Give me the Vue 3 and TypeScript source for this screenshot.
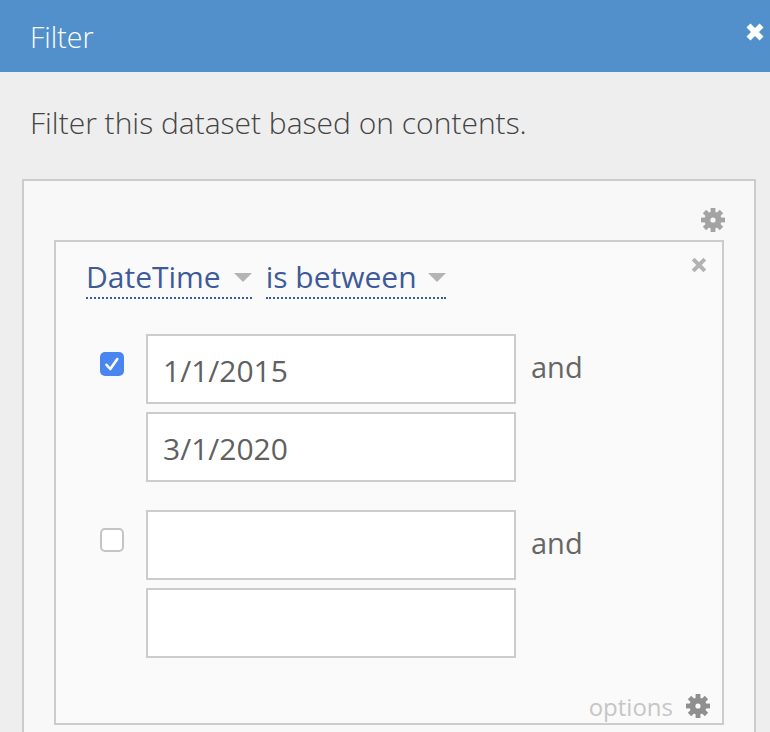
<script setup lang="ts">
const spokes = [0, 45, 90, 135]
const groups = [
  { checked: true, from: '1/1/2015', to: '3/1/2020' },
  { checked: false, from: '', to: '' },
]
</script>

<template>
  <div class="page">
    <header class="head">
      <h1 class="title">Filter</h1>
      <svg class="close" viewBox="0 0 18 18" width="18" height="18">
        <path d="M2.5 2.5l13 13M15.5 2.5l-13 13" stroke="#fff" stroke-width="5.6" fill="none" />
      </svg>
    </header>
    <p class="desc">Filter this dataset based on contents.</p>
    <section class="outer">
      <div class="gear-row">
        <svg class="gear" viewBox="0 0 26 26" width="26" height="26">
          <g fill="#a3a3a3">
            <circle cx="13" cy="13" r="8.6" />
            <rect v-for="a in spokes" :key="a" x="10.6" y="1" width="4.8" height="24" :transform="`rotate(${a} 13 13)`" />
          </g>
          <circle cx="13" cy="13" r="2.6" fill="#f8f8f8" />
        </svg>
      </div>
      <div class="inner">
        <svg class="remove" viewBox="0 0 16 16" width="16" height="16">
          <path d="M2.2 2.2l11.6 11.6M13.8 2.2L2.2 13.8" stroke="#b3b3b3" stroke-width="4" fill="none" />
        </svg>
        <div class="selectors">
          <span class="sel sel-a">DateTime<i class="caret"></i></span>
          <span class="sel sel-b">is between<i class="caret"></i></span>
        </div>
        <div v-for="(g, i) in groups" :key="i" class="group">
          <span class="check" :class="{ on: g.checked }">
            <svg v-if="g.checked" viewBox="0 0 24 24" width="24" height="24">
              <path d="M6.5 12.8l3.8 4.2 7-10" stroke="#fff" stroke-width="2.6" fill="none" stroke-linecap="round" stroke-linejoin="round" />
            </svg>
          </span>
          <div class="inputs">
            <div class="field">{{ g.from }}</div>
            <div class="field">{{ g.to }}</div>
          </div>
          <span class="and">and</span>
        </div>
        <div class="options">
          <span>options</span>
          <svg viewBox="0 0 26 26" width="26" height="26">
            <g fill="#8f8f8f">
              <circle cx="13" cy="13" r="8.6" />
              <rect v-for="a in spokes" :key="a" x="10.6" y="1" width="4.8" height="24" :transform="`rotate(${a} 13 13)`" />
            </g>
            <circle cx="13" cy="13" r="2.6" fill="#fafafa" />
          </svg>
        </div>
      </div>
    </section>
  </div>
</template>

<style>
html, body { margin: 0; background: #eee; overflow: hidden; }
</style>

<style scoped>
.page {
  width: 770px;
  height: 732px;
  overflow: hidden;
  background: #eeeeee;
  font-family: "Open Sans", sans-serif;
  color: #555;
}
.head {
  height: 72px;
  background: #5290cb;
  display: flex;
  align-items: center;
  justify-content: space-between;
  padding-left: 30px;
  box-sizing: border-box;
}
.title {
  margin: 2px 0 0;
  font-size: 28.5px;
  font-weight: 300;
  color: #fff;
  line-height: 70px;
}
.close {
  margin: -8px 6px 0 0;
}
.desc {
  margin: 0;
  padding: 32px 0 0 30px;
  height: 75px;
  box-sizing: border-box;
  font-size: 30px;
  font-weight: 300;
  line-height: 38px;
  color: #444;
}
.outer {
  margin: 32px 14px 0 22px;
  border: 2px solid #ccc;
  background: #f8f8f8;
  padding: 0 30px 40px 30px;
  height: 700px;
  box-sizing: border-box;
}
.gear-row {
  height: 59px;
  display: flex;
  justify-content: flex-end;
  align-items: flex-end;
}
.gear {
  margin: 0 -2px 7px 0;
}
.inner {
  position: relative;
  border: 2px solid #ccc;
  background: #fafafa;
  height: 485px;
  box-sizing: border-box;
  padding: 0 0 0 30px;
}
.remove {
  position: absolute;
  top: 15px;
  right: 15px;
}
.selectors {
  display: flex;
  gap: 14px;
  height: 92px;
  padding-top: 14px;
  box-sizing: border-box;
  align-items: flex-start;
}
.sel {
  display: flex;
  align-items: center;
  height: 41px;
  border-bottom: 2px dotted #3f5a9a;
  color: #3e5a99;
  font-size: 30px;
  line-height: 40px;
  box-sizing: content-box;
}
.caret {
  display: block;
  margin-left: 13px;
  margin-top: 2px;
  width: 0;
  height: 0;
  border-left: 9px solid transparent;
  border-right: 9px solid transparent;
  border-top: 9px solid #b4b4b4;
}
.sel-b .caret {
  margin-left: 11px;
}
.group {
  display: flex;
  align-items: flex-start;
  height: 176px;
}
.check {
  width: 24px;
  height: 24px;
  margin: 18px 22px 0 14px;
  border-radius: 5px;
  box-sizing: border-box;
  border: 2px solid #c4c4c4;
  background: #fff;
  flex: none;
  overflow: hidden;
}
.check.on {
  border: 0;
  background: #4a86f0;
}
.check svg {
  display: block;
}
.inputs {
  display: flex;
  flex-direction: column;
  gap: 8px;
}
.field {
  width: 370px;
  height: 70px;
  box-sizing: border-box;
  border: 2px solid #ccc;
  background: #fff;
  padding-left: 15px;
  font-size: 30px;
  line-height: 70px;
  color: #606060;
}
.and {
  margin: 10px 0 0 15px;
  font-size: 29px;
  line-height: 46px;
  color: #666;
}
.options {
  position: absolute;
  right: 11px;
  bottom: 0;
  display: flex;
  align-items: center;
  gap: 12px;
  height: 34px;
  font-size: 24px;
  color: #c6c6c6;
}
</style>
